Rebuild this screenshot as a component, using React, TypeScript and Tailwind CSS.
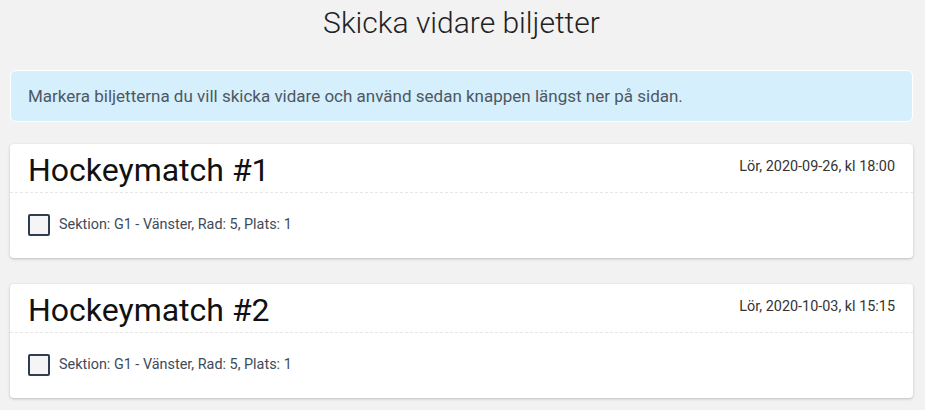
import { type ReactNode } from 'react';

interface Ticket {
  id: number;
  label: string;
}

interface EventCardProps {
  title: string;
  date: string;
  tickets: Ticket[];
}

const events: EventCardProps[] = [
  {
    title: 'Hockeymatch #1',
    date: 'Lör, 2020-09-26, kl 18:00',
    tickets: [{ id: 1, label: 'Sektion: G1 - Vänster, Rad: 5, Plats: 1' }],
  },
  {
    title: 'Hockeymatch #2',
    date: 'Lör, 2020-10-03, kl 15:15',
    tickets: [{ id: 2, label: 'Sektion: G1 - Vänster, Rad: 5, Plats: 1' }],
  },
];

function InfoBox({ children }: { children: ReactNode }) {
  return (
    <div className="rounded-[6px] border border-white bg-[#d6effd] px-[17px] py-[14px] text-[17px] leading-[22px] text-[#4d5862]">
      {children}
    </div>
  );
}

function EventCard({ title, date, tickets }: EventCardProps) {
  return (
    <div className="rounded-[4px] bg-white shadow-[0_1px_3px_rgba(0,0,0,0.22)]">
      {/* Header */}
      <div className="flex items-start justify-between border-b border-dashed border-[#e6e6e6] px-[18px] pt-[6px] pb-[2px]">
        <h2 className="text-[32px] leading-[40px] font-normal text-[#111]">{title}</h2>
        <span className="mt-[7px] text-[14.4px] leading-[20px] text-[#333]">{date}</span>
      </div>

      {/* Tickets */}
      <div className="px-[18px] pt-[21px] pb-[22px]">
        {tickets.map(t => (
          <label key={t.id} className="flex items-center gap-[9px]">
            <span className="h-[22px] w-[22px] flex-shrink-0 rounded-[2px] border-2 border-[#2c3e50] bg-[#f5f5f5]" />
            <span className="text-[14.4px] leading-[20px] text-[#3e4b58]">{t.label}</span>
          </label>
        ))}
      </div>
    </div>
  );
}

export default function App() {
  return (
    <div className="min-h-[410px] bg-[#f2f2f2] pl-[10px] pr-[12px] font-['Roboto',sans-serif]">
      <h1 className="text-center text-[30px] leading-[46px] font-light text-[#222]">
        Skicka vidare biljetter
      </h1>

      <div className="mt-[24px]">
        <InfoBox>Markera biljetterna du vill skicka vidare och använd sedan knappen längst ner på sidan.</InfoBox>
      </div>

      <div className="mt-[22px] flex flex-col gap-[26px]">
        {events.map(e => (
          <EventCard key={e.title} {...e} />
        ))}
      </div>
    </div>
  );
}
